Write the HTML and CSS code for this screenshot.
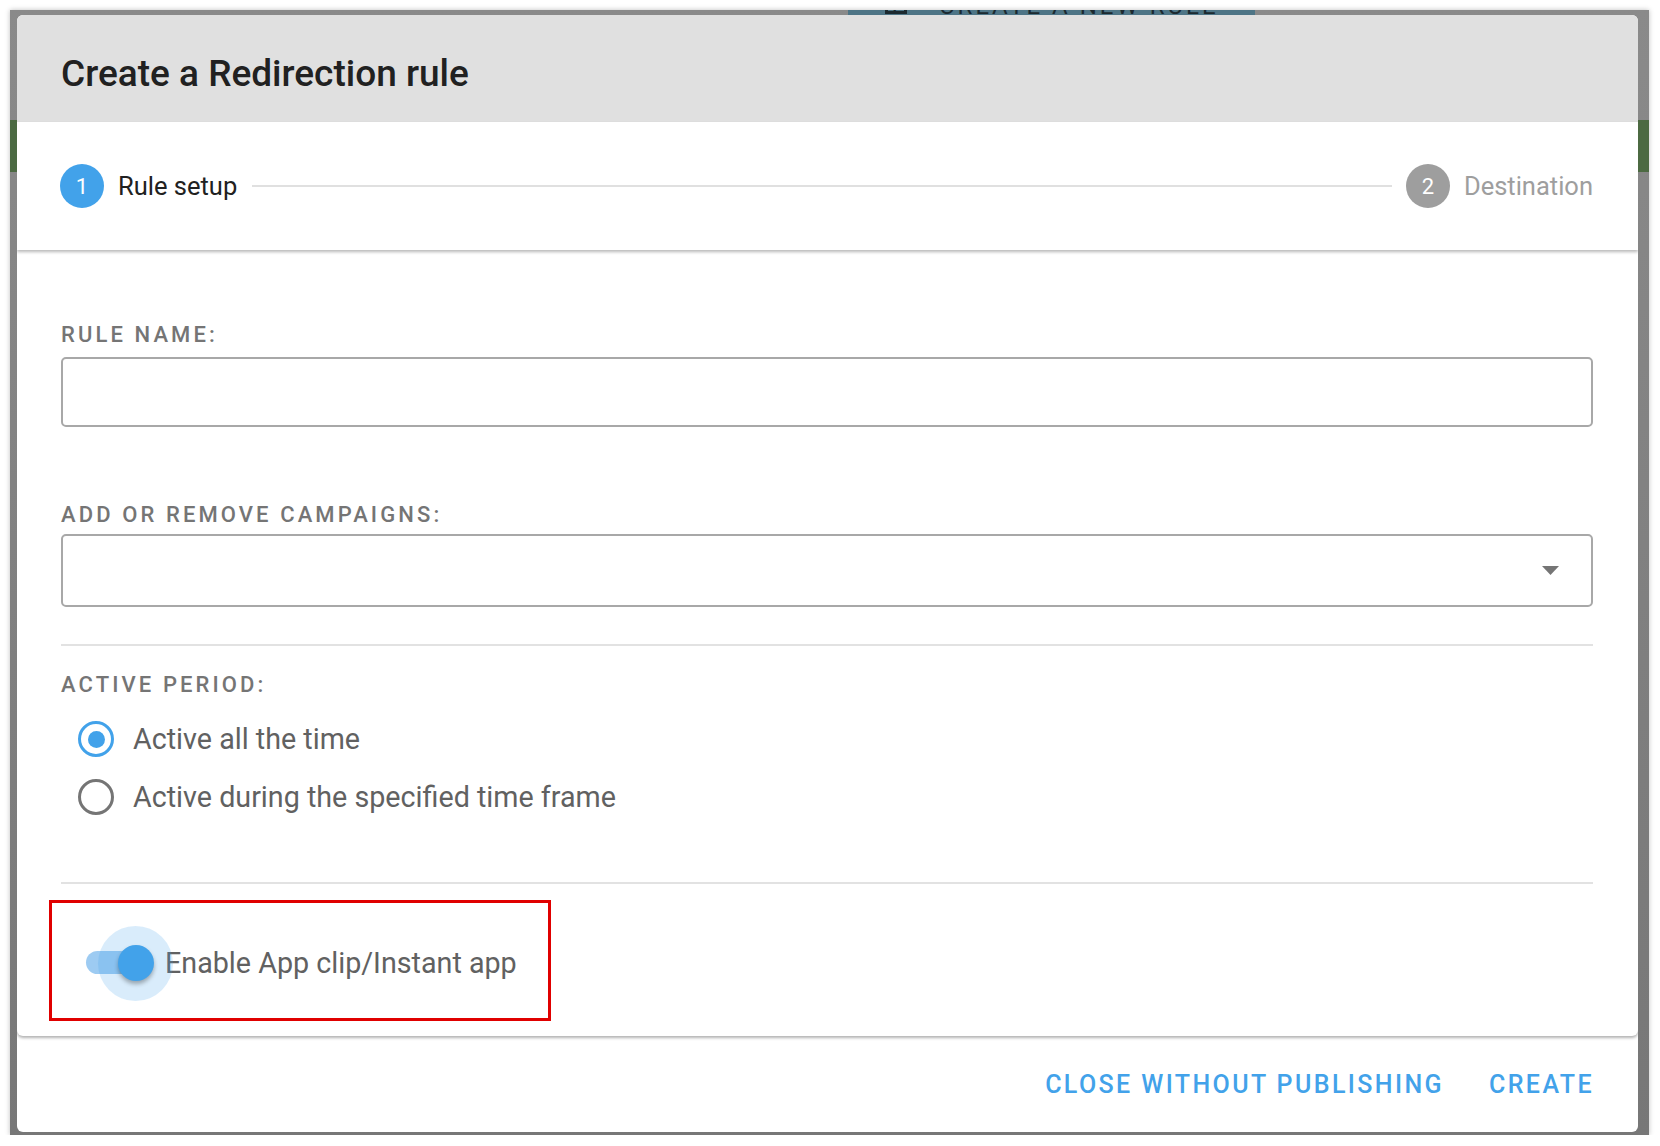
FILE: index.html
```html
<!DOCTYPE html>
<html lang="en">
<head>
<meta charset="UTF-8">
<meta name="viewport" content="width=device-width, initial-scale=1.0">
<title>Create a Redirection rule</title>
<link rel="stylesheet" href="styles.css">
</head>
<body>

<div class="backdrop">
    <div class="page-peek">
        <span class="peek-text"><span class="peek-icon">+</span>CREATE A NEW RULE</span>
    </div>

    <div class="dialog">
        <div class="dialog-title">Create a Redirection rule</div>

        <div class="stepper">
            <div class="step active">
                <span class="step-num">1</span>
                <span class="step-label">Rule setup</span>
            </div>
            <div class="step-line"></div>
            <div class="step">
                <span class="step-num">2</span>
                <span class="step-label">Destination</span>
            </div>
        </div>

        <div class="dialog-content">
            <label class="field-label name-label" for="rule-name">Rule name:</label>
            <input type="text" id="rule-name" class="text-field">

            <label class="field-label campaigns-label">Add or remove campaigns:</label>
            <div class="select-field">
                <svg class="select-arrow" width="17" height="9" viewBox="0 0 17 9"><path d="M0 0h17l-8.5 9z" fill="#757575"/></svg>
            </div>

            <hr class="divider">

            <div class="field-label period-label">Active period:</div>
            <label class="radio-row">
                <span class="radio checked"></span>
                Active all the time
            </label>
            <label class="radio-row">
                <span class="radio"></span>
                Active during the specified time frame
            </label>

            <hr class="divider lower">

            <div class="highlight">
                <span class="switch">
                    <span class="switch-track"></span>
                    <span class="switch-halo"></span>
                    <span class="switch-thumb"></span>
                </span>
                <span class="switch-label">Enable App clip/Instant app</span>
            </div>
        </div>

        <div class="dialog-actions">
            <button class="action">Close without publishing</button>
            <button class="action">Create</button>
        </div>
    </div>
</div>

</body>
</html>
```

FILE: styles.css
```css
body {
    margin: 0;
    background: #ffffff;
    font-family: Roboto, "Liberation Sans", sans-serif;
}
.backdrop {
    margin: 10px 11px 0 10px;
    height: 1125px;
    box-sizing: border-box;
    padding: 0 11px 3px 7px;
    background:
        linear-gradient(#4c6a42, #4c6a42) 0 110px / 100% 52px no-repeat,
        linear-gradient(#8a8a8a, #777777);
    box-shadow: 0 0 5px rgba(0, 0, 0, 0.25);
}
.page-peek {
    height: 5px;
    width: 407px;
    margin-left: 831px;
    overflow: hidden;
    background: #4e7586;
}
.peek-text {
    display: block;
    margin-top: -18px;
    padding-left: 37px;
    font-size: 24px;
    line-height: 22px;
    letter-spacing: 3px;
    color: #1c2a30;
    white-space: nowrap;
}
.peek-icon {
    display: inline-block;
    width: 22px;
    height: 22px;
    margin-right: 32px;
    border: 3px solid #1c2a30;
    box-sizing: border-box;
}
.dialog {
    height: 1117px;
    background: #ffffff;
    border-radius: 6px;
    overflow: hidden;
    display: flex;
    flex-direction: column;
}
.dialog-title {
    height: 107px;
    box-sizing: border-box;
    padding: 37px 44px 0;
    background: #e0e0e0;
    font-size: 37px;
    font-weight: 500;
    line-height: 43px;
    color: #212121;
}
.stepper {
    position: relative;
    z-index: 2;
    height: 128px;
    display: flex;
    align-items: center;
    padding: 0 45px 0 43px;
    background: #ffffff;
    box-shadow: 0 2px 3px rgba(0, 0, 0, 0.28);
}
.step {
    display: flex;
    align-items: center;
    gap: 14px;
}
.step-num {
    width: 44px;
    height: 44px;
    border-radius: 50%;
    background: #9e9e9e;
    color: #ffffff;
    font-size: 22px;
    display: flex;
    align-items: center;
    justify-content: center;
}
.step-label {
    font-size: 25.5px;
    color: #9e9e9e;
}
.step.active .step-num {
    background: #42a2ea;
}
.step.active .step-label {
    color: #212121;
}
.step-line {
    flex: 1;
    height: 2px;
    margin: 0 14px 0 15px;
    background: #e0e0e0;
}
.dialog-content {
    position: relative;
    z-index: 1;
    padding: 72px 45px 15px 44px;
    border-radius: 0 0 6px 6px;
    background: #ffffff;
    box-shadow: 0 2px 3px rgba(0, 0, 0, 0.3);
}
.field-label {
    display: block;
    font-size: 22px;
    font-weight: 500;
    line-height: 26px;
    letter-spacing: 3.1px;
    text-transform: uppercase;
    color: #757575;
}
.name-label {
    margin-bottom: 9px;
}
.campaigns-label {
    margin-top: 75px;
    margin-bottom: 6px;
}
.text-field {
    display: block;
    width: 100%;
    height: 70px;
    box-sizing: border-box;
    border: 2px solid #a8a8a8;
    border-radius: 5px;
    padding: 0 16px;
    font-family: inherit;
    font-size: 26px;
}
.select-field {
    height: 73px;
    box-sizing: border-box;
    border: 2px solid #a8a8a8;
    border-radius: 5px;
    display: flex;
    align-items: center;
    justify-content: flex-end;
    padding-right: 32px;
}
.select-arrow {
    display: block;
}
.divider {
    height: 2px;
    margin: 37px 0 0;
    border: none;
    background: #e2e2e2;
}
.period-label {
    margin-top: 26px;
    margin-bottom: 12px;
}
.radio-row {
    height: 58px;
    display: flex;
    align-items: center;
    gap: 19px;
    padding-left: 17px;
    font-size: 28.7px;
    color: #616161;
}
.radio {
    width: 36px;
    height: 36px;
    box-sizing: border-box;
    border: 3px solid #757575;
    border-radius: 50%;
    display: flex;
    align-items: center;
    justify-content: center;
}
.radio.checked {
    border-color: #42a2ea;
}
.radio.checked::after {
    content: "";
    width: 17px;
    height: 17px;
    border-radius: 50%;
    background: #42a2ea;
}
.divider.lower {
    margin-top: 56px;
}
.highlight {
    display: flex;
    align-items: center;
    width: 502px;
    height: 121px;
    box-sizing: border-box;
    margin: 16px 0 0 -12px;
    padding: 4px 0 0 34px;
    border: 3px solid #e00000;
}
.switch {
    position: relative;
    width: 68px;
    height: 36px;
    flex-shrink: 0;
}
.switch-track {
    position: absolute;
    left: 0;
    top: 6px;
    width: 63px;
    height: 23px;
    border-radius: 12px;
    background: #9dcbf2;
}
.switch-halo {
    position: absolute;
    left: 12px;
    top: -19px;
    width: 75px;
    height: 75px;
    border-radius: 50%;
    background: rgba(66, 162, 234, 0.2);
}
.switch-thumb {
    position: absolute;
    left: 32px;
    top: 0;
    width: 36px;
    height: 36px;
    border-radius: 50%;
    background: #42a2ea;
    box-shadow: 0 3px 4px rgba(0, 0, 0, 0.3);
}
.switch-label {
    margin-left: 11px;
    font-size: 28.7px;
    color: #616161;
}
.dialog-actions {
    flex: 1;
    display: flex;
    align-items: center;
    justify-content: flex-end;
    gap: 45px;
    padding-right: 44px;
}
.action {
    padding: 0;
    border: none;
    background: none;
    font-family: inherit;
    font-size: 25px;
    font-weight: 500;
    letter-spacing: 2.4px;
    text-transform: uppercase;
    color: #42a2ea;
    cursor: pointer;
}
```
